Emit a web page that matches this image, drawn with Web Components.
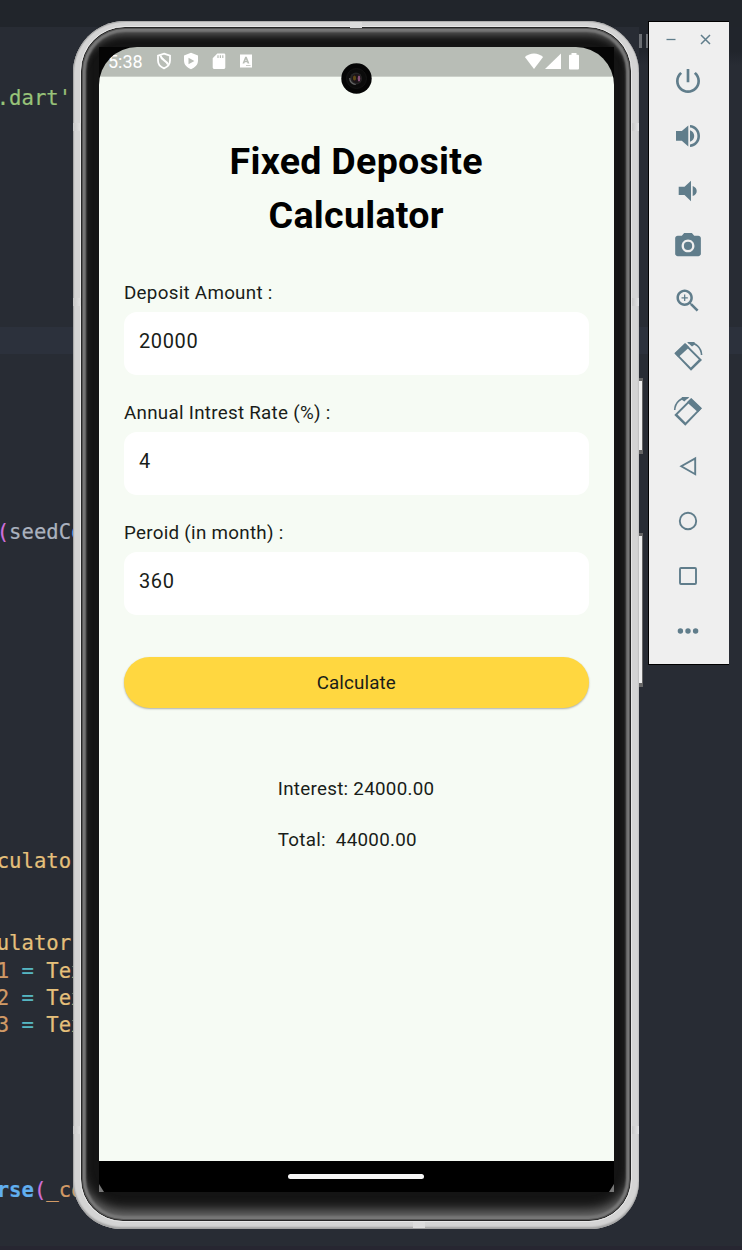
<!DOCTYPE html>
<html lang="en">
<head>
<meta charset="utf-8">
<title>Fixed Deposite Calculator</title>
<style>
html,body{margin:0;padding:0;width:742px;height:1250px;overflow:hidden;background:#282c34}
</style>
</head>
<body>
<emu-desktop></emu-desktop>
<script>
function define(name, html, init) {
  const template = document.createElement('template');
  template.innerHTML = html;
  customElements.define(name, class extends HTMLElement {
    constructor() {
      super();
      this.attachShadow({ mode: 'open' }).appendChild(template.content.cloneNode(true));
    }
    connectedCallback() { if (init) init(this, this.shadowRoot); }
  });
}

/* One row of source code; the gap attribute is the space above it */
define('code-line', `<style>
:host{display:block;height:27px;font:20.6px/27px "DejaVu Sans Mono","Liberation Mono",monospace;white-space:pre;color:#abb2bf;-webkit-text-stroke:.2px currentColor}
</style><slot></slot>`, el => { el.style.marginTop = (el.getAttribute('gap') || 0) + 'px'; });

define('code-editor', `<style>
:host{display:grid;grid-template-rows:27px 1fr 4px;width:742px;height:1250px;background:#282c34;overflow:hidden}
.tabs{background:#21252b}
.code{background:linear-gradient(#2c313c,#2c313c) 0 300px/100% 27px no-repeat,linear-gradient(#21252c 0 24px,#21252c00 38px) 639px 0/103px 60px no-repeat;overflow:hidden}
.in{margin-left:-3.3px}
.foot{background:#272631}
.g{color:#98c379}.p{color:#d070dc}.y{color:#e5c07b}.o{color:#d19a66}.c{color:#56b6c2}.b{color:#61afef}.bb{color:#61afef;font-weight:bold}
</style>
<div class="tabs"></div>
<div class="code"><div class="in">
<code-line gap="58"><span class="g">.dart'</span></code-line>
<code-line gap="407"><span class="p">(</span>seedC<span class="b">o</span></code-line>
<code-line gap="302"><span class="y">culato</span></code-line>
<code-line gap="55"><span class="y">ulator</span></code-line>
<code-line gap="1"><span class="o">1</span> <span class="c">=</span> <span class="y">Tex</span></code-line>
<code-line><span class="o">2</span> <span class="c">=</span> <span class="y">Tex</span></code-line>
<code-line><span class="o">3</span> <span class="c">=</span> <span class="y">Tex</span></code-line>
<code-line gap="138"><span class="bb">rse</span><span class="p">(</span><span class="o">_co</span></code-line>
</div></div>
<div class="foot"></div>`);

define('status-bar', `<style>
:host{display:flex;box-sizing:border-box;height:29.5px;background:#b8bdb6;color:#fff;padding:0 34.500px 0 7px;align-items:center;border-bottom:1px solid #ccd1ca;font:18px/29px Roboto,sans-serif}
span{width:48.500px;padding:1px 0 0 2px;box-sizing:border-box}
svg{display:block;flex:none;fill:#fff}
.l{margin-right:9.5px}.sp{flex:1}
</style>
<span>5:38</span>
<svg class="l" width="18" height="18" viewBox="0 0 18 18"><path d="M9 1.6 15 3.7V8.6C15 12.4 12.6 15 9 16.3 5.4 15 3 12.4 3 8.6V3.7Z" fill="none" stroke="#fff" stroke-width="1.8"/><path d="M5.4 3.5C6.500 8.500 11 8 13 12.500" fill="none" stroke="#fff" stroke-width="2"/></svg>
<svg class="l" width="18" height="18" viewBox="0 0 18 18"><path fill-rule="evenodd" d="M9 .8 16 3.4V8.6C16 12.8 13.1 15.8 9 17.2 4.900 15.800 2 12.800 2 8.600V3.400ZM6.500 5.800V12.200L12.400 9Z"/></svg>
<svg class="l" width="18" height="18" viewBox="0 0 18 18"><path fill-rule="evenodd" d="M7.300 1.500H14Q15.300 1.500 15.300 2.800V15.600Q15.300 17 14 17H4Q2.700 17 2.700 15.600V6.200ZM7.400 3.300V6H8.600V3.300ZM9.800 3.300V6H11V3.300ZM12.200 3.300V6H13.400V3.300Z"/></svg>
<svg width="18" height="18" viewBox="0 0 18 18"><path fill-rule="evenodd" d="M3 2.500H15V15.500H3ZM8.200 4.800 5.500 11.500H7.300L7.800 10.300H10.100L10.600 11.500H12.400L9.700 4.800ZM8.300 8.900 8.950 7.200 9.600 8.900ZM9 13.200V14H13.500V13.200Z"/></svg>
<i class="sp"></i>
<svg width="20" height="18" viewBox="0 0 20 18"><path d="M10 17 .9 4.900Q4.800 1.400 10 1.400T19.100 4.900Z"/></svg>
<svg width="18" height="18" viewBox="0 0 18 18"><path d="M1 17 17 1.500V17Z"/></svg>
<svg style="margin-left:6px" width="12" height="18" viewBox="0 0 12 18"><path d="M3.500 1H8.500V2.800H10Q11 2.800 11 3.800V16.500Q11 17.500 10 17.500H2Q1 17.500 1 16.500V3.800Q1 2.800 2 2.800H3.500Z"/></svg>`);

define('text-field', `<style>
:host{display:block;height:95px;font-family:Roboto,sans-serif;color:#191d19}
label{display:block;height:27px;margin-bottom:5px;font-size:18.8px;line-height:27px;letter-spacing:.28px}
div{box-sizing:border-box;height:63px;border-radius:13px;background:#fff;padding:14px 15px;font-size:20px;line-height:30px;letter-spacing:.63px}
</style><label></label><div></div>`, (el, r) => {
  r.querySelector('label').textContent = el.getAttribute('label');
  r.querySelector('div').textContent = el.getAttribute('value');
});

define('pill-button', `<style>
:host{display:flex;box-sizing:border-box;padding-top:2px;align-items:center;justify-content:center;height:51px;margin:0 -.5px;border-radius:26px;background:#ffd740;box-shadow:0 1px 2px rgba(0,0,0,.3);font:18.8px/27px Roboto,sans-serif;letter-spacing:.12px;color:#191d19}
</style><slot></slot>`);

define('calc-app', `<style>
:host{display:block;box-sizing:border-box;flex:1;background:#f6fbf4;padding:57px 25.500px 0 25px;font-family:Roboto,sans-serif;color:#191d19}
h1{margin:0 0 38px;font-size:37.6px;line-height:54px;letter-spacing:.28px;font-weight:700;color:#000;text-align:center}
.fields{display:grid;gap:25.300px;margin-bottom:42px}
.res{width:157px;margin:68px auto 0;display:grid;gap:24px;font-size:18.8px;line-height:27px;letter-spacing:.28px;white-space:pre}
</style>
<h1>Fixed Deposite<br>Calculator</h1>
<div class="fields">
<text-field label="Deposit Amount :" value="20000"></text-field>
<text-field label="Annual Intrest Rate (%) :" value="4"></text-field>
<text-field label="Peroid (in month) :" value="360"></text-field>
</div>
<pill-button>Calculate</pill-button>
<div class="res"><div>Interest: 24000.00</div><div>Total:  44000.00</div></div>`);

define('nav-bar', `<style>
:host{display:flex;box-sizing:border-box;height:31px;background:#000;justify-content:center;align-items:center;padding-right:1px}
i{width:136px;height:5px;border-radius:3px;background:#f6f6f6}
</style><i></i>`);

define('phone-frame', `<style>
:host{display:block;position:relative;width:566px;height:1208px}
.shell{box-sizing:border-box;width:566px;height:1208px;padding:6px 8px 8px;border-radius:52px 52px 48px 48px;background:#d4d4d4;box-shadow:inset 1px 0 1px #a8a8a8,inset 0 1px 1px #aaa,inset 0 -2px 2px #a0a0a0}
.rim{box-sizing:border-box;width:550px;height:1194px;border:1px solid #262626;border-radius:44px 44px 42px 42px;padding:19px 17px 29px;background:#141414;outline:1px solid #e6e6e6;
box-shadow:inset 0 0 0 1px #555,inset 0 0 2px 4px #777,inset 0 9px 6px -1px #4d4d4d,inset 0 -12px 12px -2px #6d6d6d}
.screen{position:relative;width:515px;height:1145px;background:#050505}
.view{display:flex;flex-direction:column;width:515px;height:1145px;border-radius:38px 38px 0 0;overflow:hidden}
.cam{position:absolute;left:242px;top:15.500px;width:31px;height:31px}
.corner{position:absolute;bottom:0;width:0;height:0;border-top:8px solid transparent}
.cl{left:0;border-left:5px solid #777}.cr{right:0;border-right:5px solid #777}
.notch{position:absolute;background:#dcdcdc}
.notch.v{background:linear-gradient(90deg,#c8c8c8,#e2e2e2)}
.side{position:absolute;left:566px;width:4px;box-sizing:border-box;border:solid #666;border-width:3px 1px 4px 0;background:#eee}
</style>
<div class="shell"><div class="rim"><div class="screen">
<div class="view"><status-bar></status-bar><calc-app></calc-app><nav-bar></nav-bar></div>
<i class="corner cl"></i><i class="corner cr"></i>
<svg class="cam" viewBox="0 0 31 31"><circle cx="15.500" cy="15.500" r="15.200" fill="#050505"/><circle cx="15.500" cy="15.500" r="10" fill="#0b0b0b" stroke="#131313"/><circle cx="15" cy="15.500" r="6" fill="#252525"/><circle cx="15.500" cy="15.500" r="4.500" fill="#1c1418"/><ellipse cx="13.500" cy="15" rx="1.600" ry="2.500" fill="#5c4715"/><ellipse cx="18" cy="15.500" rx="1.300" ry="3" fill="#875277"/><path d="M8.700 15a6.300 6.300 0 0 0 6 6.500" fill="none" stroke="#666" stroke-width="1.200"/></svg>
</div></div></div>
<i class="notch" style="left:277px;top:1px;width:12px;height:6px"></i>
<i class="notch" style="left:340px;top:1201px;width:12px;height:6px"></i>
<i class="notch v" style="left:0;top:102px;width:8px;height:8px"></i>
<i class="notch v" style="left:0;top:277px;width:8px;height:8px"></i>
<i class="notch v" style="left:0;top:1105px;width:8px;height:8px"></i>
<i class="notch v" style="left:559px;top:102px;width:7px;height:8px"></i>
<i class="notch v" style="left:559px;top:277px;width:7px;height:8px"></i>
<i class="notch v" style="left:559px;top:1105px;width:7px;height:8px"></i>
<i class="side" style="top:357px;height:76px"></i>
<i class="side" style="top:512px;height:154px"></i>`);

const dev = '<path fill-rule="evenodd" d="M13 3 30 20 19 30.700 2.300 13.300ZM14.800 7.500 6.700 15.200 18.800 27.500 26.800 19.500Z"/><path d="M13.500 3.500 17.300 7.300 6.300 17.200 2.800 13.500Z"/><path d="M29.500 20 26 16.500 15.800 27 19 30.200Z" fill="none"/><path d="M16 2.800C23.500 2 29.300 7.500 29.600 15" fill="none" stroke="#607d8b" stroke-width="1.600"/><path d="M15 2H22.500L22.800 4.500 20 6.600Z"/>';
const ICONS = {
  power: '<g transform="scale(1.3333)"><path d="M13 3h-2v10h2V3zm4.830 2.170l-1.420 1.420C17.990 7.860 19 9.810 19 12c0 3.870-3.130 7-7 7s-7-3.130-7-7c0-2.190 1.010-4.140 2.580-5.420L6.170 5.170C4.230 6.820 3 9.260 3 12c0 4.970 4.030 9 9 9s9-4.030 9-9c0-2.740-1.230-5.180-3.170-6.830z"/></g>',
  up: '<path d="M4 11H9.800L16.300 5.500V26.500L9.800 20.700H4ZM18 10.200Q22.200 12 22.200 16T18 21.800ZM18 5C24 5.500 28 10 28 16S24 26.500 18 27.100V24.500C22.500 23.800 25.400 20.500 25.400 16S22.500 8.200 18 7.600Z"/>',
  down: '<path d="M6.700 11.700H12.500L19 5.700V26.300L12.500 19.900H6.700ZM20.700 11Q24.700 12.500 24.700 16T20.700 21Z"/>',
  camera: '<g transform="translate(.6 .5) scale(1.285)"><circle cx="12" cy="12" r="3.200"/><path d="M9 2L7.170 4H4c-1.100 0-2 .9-2 2v12c0 1.100.9 2 2 2h16c1.100 0 2-.9 2-2V6c0-1.100-.9-2-2-2h-3.170L15 2H9zm3 15c-2.760 0-5-2.240-5-5s2.240-5 5-5 5 2.240 5 5-2.240 5-5 5z"/></g>',
  zoom: '<g transform="translate(.7 .8) scale(1.26)"><path d="M15.500 14h-.79l-.28-.27C15.410 12.590 16 11.110 16 9.500 16 5.910 13.090 3 9.500 3S3 5.910 3 9.500 5.910 16 9.500 16c1.610 0 3.090-.59 4.230-1.570l.27.28v.79l5 4.990L20.490 19l-4.990-5zm-6 0C7.010 14 5 11.990 5 9.500S7.010 5 9.500 5 14 7.010 14 9.500 11.990 14 9.500 14zm.5-7H9v2H7v1h2v2h1v-2h2V9h-2z"/></g>',
  left: dev,
  right: '<g transform="translate(32.300 0) scale(-1 1)">' + dev + '</g>',
  back: '<path d="M23.200 8.300V24.200L9.300 16.200Z" fill="none" stroke="#607d8b" stroke-width="1.900"/>',
  home: '<circle cx="16" cy="16" r="8.200" fill="none" stroke="#607d8b" stroke-width="1.900"/>',
  square: '<rect x="8" y="8" width="16" height="16" rx="1" fill="none" stroke="#607d8b" stroke-width="1.900"/>',
  more: '<circle cx="8.400" cy="16" r="2.700"/><circle cx="16" cy="16" r="2.700"/><circle cx="23.600" cy="16" r="2.700"/>'
};

define('tool-icon', `<style>
:host{display:grid;place-items:center;height:55px}
svg{display:block;fill:#607d8b}
</style><svg width="32" height="32" viewBox="0 0 32 32"></svg>`, (el, r) => {
  r.querySelector('svg').innerHTML = ICONS[el.getAttribute('name')];
});

define('emu-toolbar', `<style>
:host{display:block;box-sizing:border-box;width:81px;height:644px;background:#efefef;border:1px solid #000;border-right:0}
.win{display:flex;height:31px;box-sizing:border-box;padding:11px 17px 0 16px;justify-content:space-between}
svg{display:block;stroke:#607d8b;fill:none}
.list{width:78px}
</style>
<div class="win"><svg width="12" height="13" viewBox="0 0 12 13"><path d="M1.500 6.500H10.500" stroke-width="1.300"/></svg><svg width="13" height="13" viewBox="0 0 13 13"><path d="M2 2 11 11M11 2 2 11" stroke-width="1.500"/></svg></div>
<div class="list">${['power','up','down','camera','zoom','left','right','back','home','square','more'].map(n => `<tool-icon name="${n}"></tool-icon>`).join('')}</div>`);

define('emu-desktop', `<style>
:host{display:block;position:relative;width:742px;height:1250px;overflow:hidden}
phone-frame{position:absolute;left:73px;top:21px}
emu-toolbar{position:absolute;left:648px;top:21px}
.pause{position:absolute;left:639px;top:34px;width:3px;height:14px;background:#6b6e73;box-shadow:7px 0 #6b6e73}
</style>
<code-editor></code-editor><i class="pause"></i><phone-frame></phone-frame><emu-toolbar></emu-toolbar>`);
</script>
</body>
</html>
